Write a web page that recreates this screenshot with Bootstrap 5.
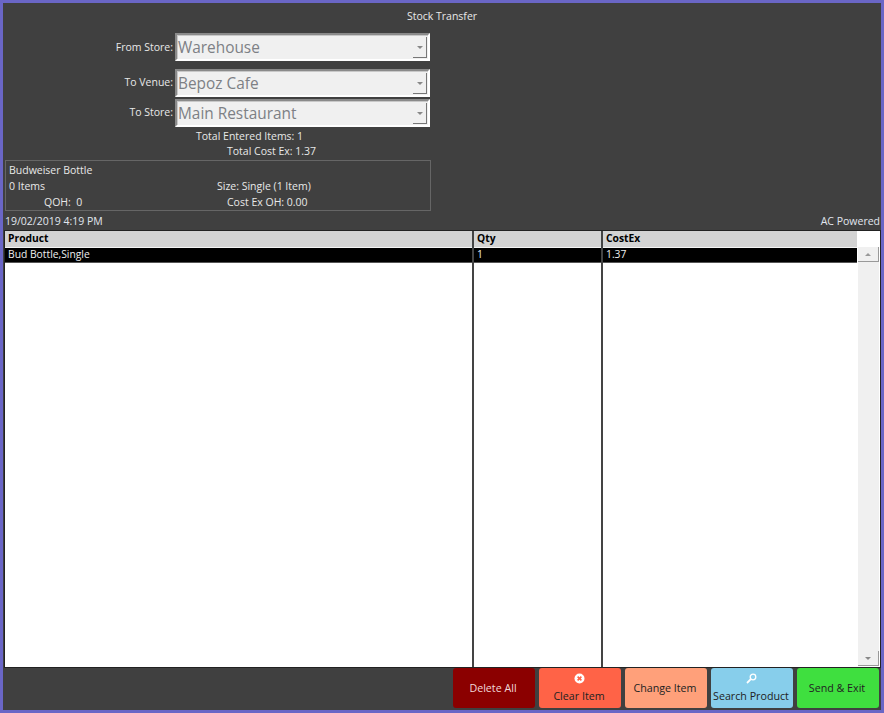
<!DOCTYPE html>
<html lang="en">
<head>
<meta charset="utf-8">
<title>Stock Transfer</title>
<link href="https://cdn.jsdelivr.net/npm/bootstrap@5.3.0/dist/css/bootstrap.min.css" rel="stylesheet">
<style>
html,body{height:100%;margin:0}
body{background:#404040;color:#e8e8e8;font-family:"Open Sans","Noto Sans",sans-serif;font-size:10.5px;line-height:15px;overflow:hidden}
.win{height:713px;border:3px solid #6a66c6;display:flex;flex-direction:column;padding-top:6px}
.ttl{height:15px;margin-bottom:9px;text-align:center}
.pick-row{display:flex;align-items:center;height:28px}
.pick-lab{width:172px;text-align:right;padding-right:2px;padding-bottom:1px;font-size:10.5px}
.pick-lab.lab-first{padding-bottom:0}
.pick{width:255px;height:28px;background:#f0f0f0;color:#7d8085;border:2px solid #fff;border-top-color:#8a8a8a;border-left-color:#8a8a8a;font-size:15.4px;line-height:26px;padding-left:1px;display:flex;justify-content:space-between;box-shadow:inset 1px 1px 0 #c8c8c8}
.gap-a{margin-top:8px}
.gap-b{margin-top:2px}
.pick-btn{width:14px;margin:2px 1px 1px 0;border-right:1px solid #777;border-bottom:1px solid #777;display:flex;align-items:center;justify-content:center}
.tri{width:0;height:0;border-left:3px solid transparent;border-right:3px solid transparent;border-top:3px solid #888}
.totals{width:425px;height:30px;margin-top:2px}
.tot1{padding-left:193px}.tot2{padding-left:224px}
.info{width:426px;height:51px;margin:1px 0 0 2px;border:1px solid #666;padding:2px 3px;display:grid;grid-template-columns:208px 1fr;grid-auto-rows:16px}
.qoh{padding-left:35px}
.ce{padding-left:10px}
.stat{height:18px;display:flex;justify-content:space-between;align-items:flex-end;padding:0 1px 0 2px;color:#e0e6ee}
.grid-wrap{flex:1 1 auto;min-height:0;border:1px solid #222;margin:1px 0 0 1px;background:#fff;display:flex;color:#000}
.tb{flex:1 1 auto;height:100%;table-layout:fixed;border-collapse:collapse;margin:0;font-size:10.3px}
.tb th{height:16px;padding:0 3px 2px;background:#d3d3d3;font-weight:700;line-height:14px;border-bottom:1px solid #f4f4f4;vertical-align:middle}
.tb td{height:15px;padding:0 3px 1px;line-height:13px;vertical-align:middle}
.tb tr.sel td{background:#000;color:#eee;border-bottom:1px solid #555}
.tb tr.fill td{height:auto;background:#fff}
.tb th+th,.tb td+td{border-left:2px solid #444}
.scr{width:23px;flex:none;padding-top:16px;padding-bottom:1px;display:flex;flex-direction:column}
.scr-inner{flex:1;background:#f0f0f0;display:flex;flex-direction:column;justify-content:space-between;margin-left:1px;margin-right:1px}
.scr-b{height:15px;display:flex;align-items:center;justify-content:center;background:#f0f0f0;border-right:1px solid #999;border-bottom:1px solid #999}
.tri-up{width:0;height:0;border-left:3px solid transparent;border-right:3px solid transparent;border-bottom:3px solid #999}
.actions{height:42px;display:flex;justify-content:flex-end;gap:4px;padding:0 2px 2px 0}
.act{width:82px;height:40px;border:0;border-radius:3px;padding:0 2px 0 0;font:inherit;font-size:10.7px;line-height:14px;display:flex;flex-direction:column;align-items:center;justify-content:center;color:#222}
.has-ico{justify-content:flex-end;padding-bottom:5px}
.has-ico svg{display:block;margin-bottom:5px}
.a-del{background:#8b0000;color:#f0d8d8}
.a-clr{background:#ff6347}
.a-chg{background:#ffa07a}
.a-sch{background:#87ceeb}
.a-snd{background:#3fdf3f}
</style>
</head>
<body>
<div class="win">
  <div class="ttl">Stock Transfer</div>
  <div class="pick-row"><div class="pick-lab lab-first">From Store:</div><div class="pick"><span>Warehouse</span><span class="pick-btn"><i class="tri"></i></span></div></div>
  <div class="pick-row gap-a"><div class="pick-lab">To Venue:</div><div class="pick"><span>Bepoz Cafe</span><span class="pick-btn"><i class="tri"></i></span></div></div>
  <div class="pick-row gap-b"><div class="pick-lab">To Store:</div><div class="pick"><span>Main Restaurant</span><span class="pick-btn"><i class="tri"></i></span></div></div>
  <div class="totals"><div class="tot1">Total Entered Items: 1</div><div class="tot2">Total Cost Ex: 1.37</div></div>
  <div class="info">
    <div>Budweiser Bottle</div><div></div>
    <div>0 Items</div><div>Size: Single (1 Item)</div>
    <div class="qoh">QOH:&nbsp; 0</div><div class="ce">Cost Ex OH: 0.00</div>
  </div>
  <div class="stat"><span>19/02/2019 4:19 PM</span><span>AC Powered</span></div>
  <div class="grid-wrap">
    <table class="tb">
      <colgroup><col style="width:468px"><col style="width:129px"><col></colgroup>
      <tr><th>Product</th><th>Qty</th><th>CostEx</th></tr>
      <tr class="sel"><td>Bud Bottle,Single</td><td>1</td><td>1.37</td></tr>
      <tr class="fill"><td></td><td></td><td></td></tr>
    </table>
    <div class="scr"><div class="scr-inner"><div class="scr-b"><i class="tri-up"></i></div><div class="scr-b"><i class="tri"></i></div></div></div>
  </div>
  <div class="actions">
    <button class="act a-del">Delete All</button>
    <button class="act a-clr has-ico"><svg width="11" height="11" viewBox="0 0 11 11"><circle cx="5.5" cy="5.5" r="5" fill="#fff"/><path d="M3.6 3.6l3.8 3.8M7.4 3.6l-3.8 3.8" stroke="#ff6347" stroke-width="1.6"/></svg>Clear Item</button>
    <button class="act a-chg">Change Item</button>
    <button class="act a-sch has-ico"><svg width="11" height="11" viewBox="0 0 11 11" fill="none" stroke="#fff"><circle cx="7" cy="4" r="2.8" stroke-width="1.3"/><path d="M4.8 6.2L1 10" stroke-width="1.8"/></svg>Search Product</button>
    <button class="act a-snd">Send &amp; Exit</button>
  </div>
</div>
</body>
</html>
